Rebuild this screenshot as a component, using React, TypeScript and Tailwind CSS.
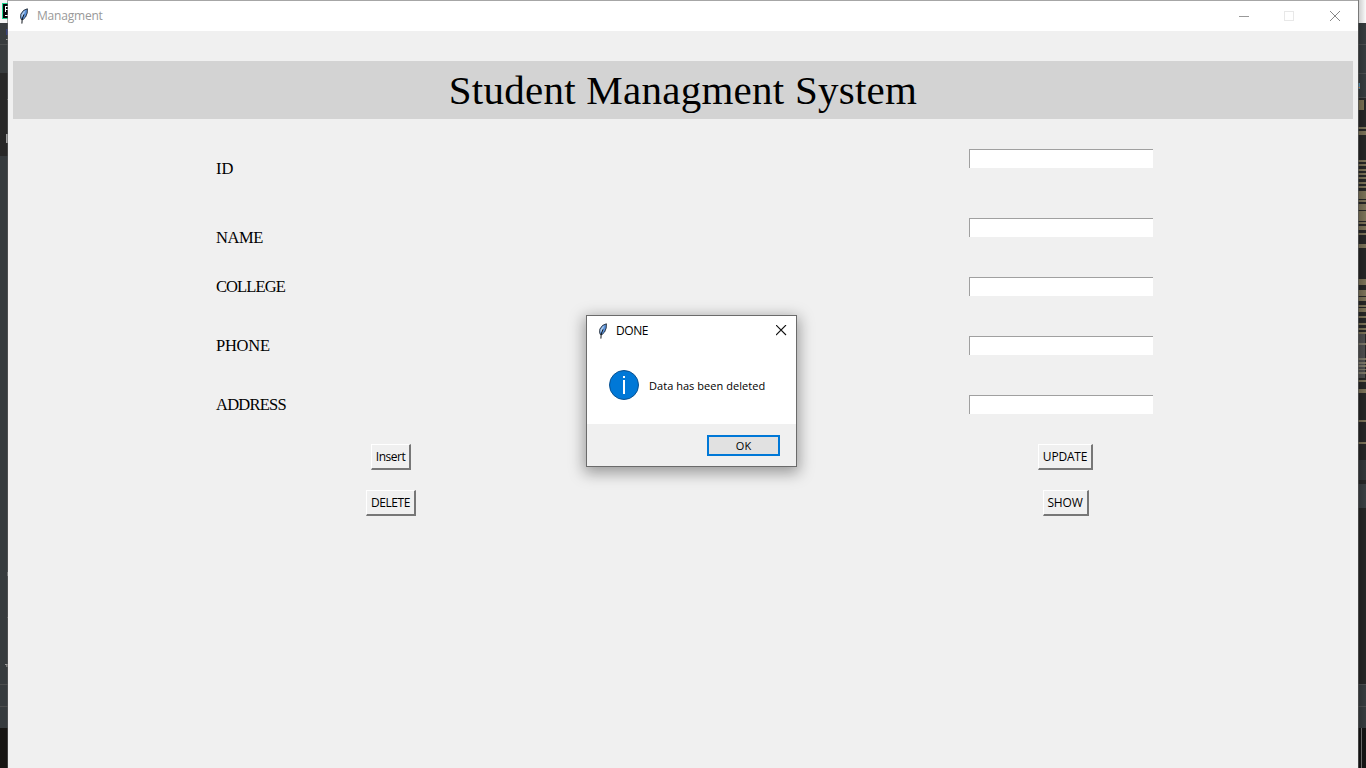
import React from "react";

const minimapLines: [number, number][] = [
  [127, 2], [131, 4], [160, 2], [164, 2], [169, 2], [173, 2], [177, 2], [182, 2], [186, 2],
  [191, 8], [200, 2], [204, 6], [211, 10], [222, 2], [226, 4], [233, 2], [244, 4], [279, 6],
  [290, 6], [297, 4], [305, 2], [308, 4], [316, 2], [323, 2], [328, 2], [332, 2], [343, 2],
  [358, 2], [362, 2], [365, 2], [369, 1], [372, 2], [380, 2], [389, 4], [420, 2], [442, 2],
];

function Feather({ className }: { className?: string }) {
  return (
    <svg className={className} width="10" height="16" viewBox="0 0 10 16" fill="none">
      <path d="M2.4 11.6 L1.6 9.6 L1.9 6 L4.6 2.4 L8.4 0.8 L8.2 5 L6.6 9 L4.2 11.4 Z" fill="#5b93dc" stroke="#1c2530" strokeWidth="0.9" />
      <path d="M2.4 9.2 L2.6 6.4 L4.6 3.8 L6.4 2.4 L3.6 9 Z" fill="#b4cfec" />
      <path d="M5 6.4 L3.2 11 L2.9 15.6" stroke="#10151c" strokeWidth="1" />
    </svg>
  );
}

function LeftEdge() {
  return (
    <svg width="8" height="768" className="shrink-0" shapeRendering="crispEdges">
      <rect width="8" height="23" fill="#f4f4f4" />
      <rect x="2" y="3" width="6" height="16" fill="#20d38e" />
      <rect x="3" y="4" width="5" height="14" fill="#070707" />
      <path d="M5.5 6v6M5 6.5h3M5 9.5h3M5 15.5h3" stroke="#fff" />
      <rect y="23" width="8" height="50" fill="#383c3e" />
      <rect y="44" width="8" height="1" fill="#4b4d4e" />
      <rect x="6" y="29" width="2" height="6" fill="#38427a" />
      <rect x="6" y="39" width="2" height="1" fill="#a0a0a0" />
      <rect y="73" width="8" height="83" fill="#282828" />
      <rect x="7" y="99" width="1" height="1" fill="#777" />
      <rect x="6" y="134" width="2" height="9" fill="#a4a4a4" />
      <rect y="156" width="8" height="572" fill="#363b3e" />
      <rect x="7" y="572" width="1" height="4" fill="#92979a" />
      <rect x="7" y="617" width="1" height="1" fill="#777" />
      <rect x="5" y="664" width="3" height="1" fill="#999" />
      <rect x="6" y="665" width="2" height="2" fill="#777" />
      <rect y="684" width="8" height="1" fill="#4b4d4e" />
      <rect y="706" width="8" height="1" fill="#4b4d4e" />
      <rect y="728" width="8" height="40" fill="#171614" />
      <rect x="7" y="0" width="1" height="768" fill="#606060" opacity="0.55" />
    </svg>
  );
}

function RightEdge() {
  return (
    <svg width="8" height="768" className="shrink-0" shapeRendering="crispEdges">
      <defs>
        <linearGradient id="edgeShade">
          <stop offset="0" stopColor="#000" stopOpacity="0.2" />
          <stop offset="1" stopColor="#000" stopOpacity="0" />
        </linearGradient>
      </defs>
      <rect width="8" height="768" fill="#262626" />
      <rect width="8" height="23" fill="#fafafa" />
      <rect y="23" width="8" height="77" fill="#373c3f" />
      <path d="M0 44.5h8M0 73.5h8M0 97.5h8" stroke="#4d4f50" />
      <rect y="83" width="2" height="6" fill="#5a93b0" />
      <rect y="87" width="2" height="1" fill="#c98a50" />
      <rect y="98" width="8" height="2" fill="#2a2a2a" />
      <rect y="100" width="6" height="10" fill="#7b7154" />
      {minimapLines.map(([y, h]) => (
        <rect key={y} y={y} width="8" height={h} fill="#7b7258" />
      ))}
      <rect y="334" width="7" height="44" fill="#808080" opacity="0.45" />
      <rect y="460" width="8" height="20" fill="#33373a" />
      <rect y="484" width="8" height="24" fill="#3a3f42" />
      <rect y="684" width="8" height="44" fill="#373c3f" />
      <path d="M0 684.5h8M0 706.5h8" stroke="#4d4f50" />
      <rect y="728" width="8" height="40" fill="#151515" />
      <rect x="3" y="728" width="1" height="40" fill="#747474" />
      <rect width="8" height="768" fill="url(#edgeShade)" />
      <rect width="1" height="768" fill="#555555" opacity="0.7" />
    </svg>
  );
}

function Field({ label, className, labelClass }: { label: string; className: string; labelClass: string }) {
  return (
    <div className={`flex justify-between pl-[208px] pr-[205px] ${className}`}>
      <label className={`font-['Liberation_Serif',serif] text-[16.5px] leading-5 text-black ${labelClass}`}>
        {label}
      </label>
      <input className="block h-[19px] w-[184px] border-t border-l border-[#a0a0a0] bg-white outline-none" />
    </div>
  );
}

function TkButton({ children, className }: { children: React.ReactNode; className: string }) {
  return (
    <button
      className={`flex h-[26px] items-center justify-center border-t border-r-2 border-b-2 border-l border-t-white border-l-white border-r-[#777777] border-b-[#777777] bg-[#f0f0f0] whitespace-nowrap text-black ${className}`}
    >
      {children}
    </button>
  );
}

function Dialog() {
  return (
    <div className="absolute top-[315px] left-[586px] flex h-[152px] w-[211px] flex-col border border-[#6b6b6b] bg-white shadow-[0_4px_14px_2px_rgba(0,0,0,0.36)]">
      <div className="flex h-[29px] items-center pl-[11px] pr-[9px]">
        <Feather />
        <span className="ml-2 text-[12px] tracking-[-0.45px] text-black">DONE</span>
        <svg className="ml-auto" width="11" height="11" viewBox="0 0 11 11">
          <path d="M0 0L10 10M10 0L0 10" stroke="#111" strokeWidth="1.1" />
        </svg>
      </div>
      <div className="flex h-[79px] items-center pl-[22px]">
        <svg width="30" height="30" viewBox="0 0 30 30" className="shrink-0">
          <circle cx="15" cy="15" r="14.5" fill="#0078d7" stroke="#0a5190" />
          <rect x="14" y="6" width="2" height="2" fill="#fff" />
          <rect x="14" y="10" width="2" height="14" fill="#fff" />
        </svg>
        <span className="ml-[10px] pt-[3px] text-[11px] tracking-[0.04px] whitespace-nowrap text-black">Data has been deleted</span>
      </div>
      <div className="flex flex-1 items-start justify-end bg-[#f0f0f0] pt-[11px] pr-4">
        <button className="flex h-[21px] w-[73px] items-center justify-center border-2 border-[#0078d7] bg-[#e1e1e1] pt-0.5 text-[11px] text-black">
          OK
        </button>
      </div>
    </div>
  );
}

export default function App() {
  return (
    <div className="relative flex h-[768px] w-[1366px] overflow-hidden bg-[#262626] font-['Open_Sans',sans-serif]">
      <LeftEdge />
      <main className="flex w-[1350px] shrink-0 flex-col border-t border-[#a6a6a6] bg-[#f0f0f0]">
        <header className="flex h-[30px] shrink-0 items-center bg-white pl-[11px] pr-[18px]">
          <Feather />
          <span className="ml-2 text-[12px] tracking-[-0.2px] text-[#999999]">Managment</span>
          <div className="ml-auto flex items-center">
            <svg width="101" height="11" viewBox="0 0 101 11" fill="none">
              <path d="M0 5.5h10" stroke="#999" />
              <rect x="45.5" y="0.5" width="9" height="9" stroke="#e8e8e8" />
              <path d="M91 0L101 10M101 0L91 10" stroke="#888" />
            </svg>
          </div>
        </header>
        <h1 className="mx-[5px] mt-[30px] flex h-[58px] shrink-0 items-center justify-center bg-[#d3d3d3] pt-px font-['Liberation_Serif',serif] text-[41px] leading-none tracking-[0.25px] whitespace-nowrap text-black">
          Student Managment System
        </h1>
        <form className="flex flex-col">
          <Field label="ID" className="mt-[30px] h-[69px]" labelClass="pt-[10px]" />
          <Field label="NAME" className="h-[59px]" labelClass="pt-[10px] tracking-[-0.4px]" />
          <Field label="COLLEGE" className="h-[59px]" labelClass="tracking-[-0.9px]" />
          <Field label="PHONE" className="h-[59px]" labelClass="tracking-[-0.25px]" />
          <Field label="ADDRESS" className="h-[49px]" labelClass="tracking-[-0.75px]" />
          <div className="grid grid-cols-[766px_583px] gap-y-5 text-[12px] tracking-[-0.2px]">
            <TkButton className="w-[40px] justify-self-center tracking-[-0.5px]">Insert</TkButton>
            <TkButton className="w-[55px] justify-self-center">UPDATE</TkButton>
            <TkButton className="w-[50px] justify-self-center tracking-[-0.4px]">DELETE</TkButton>
            <TkButton className="w-[46px] justify-self-center">SHOW</TkButton>
          </div>
        </form>
      </main>
      <RightEdge />
      <Dialog />
    </div>
  );
}
